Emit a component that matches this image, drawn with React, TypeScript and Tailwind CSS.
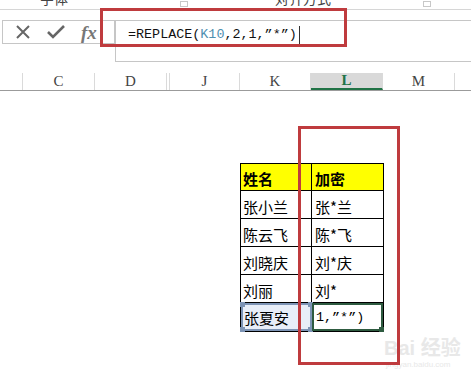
import React from "react";

const cols = [
  { label: "", w: "w-[23px]" },
  { label: "C", w: "w-[72px]" },
  { label: "D", w: "w-[72px]" },
  { label: "", w: "w-[3px]" },
  { label: "J", w: "w-[70px]" },
  { label: "K", w: "w-[71px]" },
  { label: "L", w: "w-[72px]", active: true },
  { label: "M", w: "w-[72px]" },
];

const rows = [
  ["张小兰", "张*兰"],
  ["陈云飞", "陈*飞"],
  ["刘晓庆", "刘*庆"],
  ["刘丽", "刘*"],
];

const cjk = { fontFamily: '"Noto Sans CJK SC", sans-serif' };
const mono = { fontFamily: '"Liberation Mono", "Noto Sans CJK SC", monospace' };
const serif = { fontFamily: '"Liberation Serif", serif' };

export default function App() {
  return (
    <div className="relative w-[471px] h-[383px] bg-white overflow-hidden">
      {/* ribbon group labels, cut off at the top */}
      <div className="h-[10px] border-b border-[#d6d6d6] flex text-[14px] text-[#444] leading-none overflow-hidden" style={cjk}>
        <span className="ml-[40px] -mt-[9px]">字体</span>
        <span className="ml-[112px] mt-[1px] w-[8px] h-[6px] border border-[#c8c8c8]" />
        <span className="ml-[87px] -mt-[9px]">对齐方式</span>
        <span className="ml-[92px] mt-[1px] w-[8px] h-[6px] border border-[#c8c8c8]" />
      </div>

      {/* formula bar */}
      <div className="flex h-[52px]">
        <div className="w-[115px] pt-[10px] pl-[2px]">
          <div className="h-[24px] border border-[#c6c6c6] flex items-center">
            <svg width="16" height="14" viewBox="0 0 16 14" className="ml-[12px]">
              <path d="M2 1 L14 13 M14 1 L2 13" stroke="#666" strokeWidth="2" />
            </svg>
            <svg width="18" height="14" viewBox="0 0 18 14" className="ml-[16px]">
              <path d="M1 7 L6 12 L17 1" stroke="#666" strokeWidth="2.6" fill="none" />
            </svg>
            <span className="ml-[16px] text-[19px] italic font-bold text-[#777] leading-none" style={serif}>
              fx
            </span>
          </div>
        </div>
        <div className="flex-1 mt-[10px] border-l border-t border-b border-[#c6c6c6] flex items-start pt-[4px] pl-[12px]">
          <span className="text-[13.4px] text-[#111] leading-[20px]" style={mono}>
            =REPLACE(<span className="text-[#4f8fb0]">K10</span>,2,1,”*”)
          </span>
          <span className="w-px h-[18px] bg-[#333] ml-[2px] mt-[1px]" />
        </div>
      </div>

      {/* column headers */}
      <div className="mt-[11px] flex h-[18px] border-b border-[#9b9b9b]">
        {cols.map((c, i) => (
          <div
            key={i}
            className={`${c.w} shrink-0 flex items-center justify-center border-r border-[#dadada] text-[15px] leading-none ${
              c.active ? "bg-[#d9d9d9] border-b-2 border-b-[#217346] text-[#217346] font-bold" : "text-[#444]"
            }`}
            style={serif}
          >
            {c.label}
          </div>
        ))}
      </div>

      {/* sheet content */}
      <div className="pl-[240px] pt-[72px]" style={cjk}>
        <div className="w-[144px] border border-black text-[15px] text-black">
          <div className="flex h-[27px] bg-[#ffff00] border-b border-black font-bold">
            <div className="w-[71px] border-r border-black flex items-end pl-[2px] leading-[22px]">姓名</div>
            <div className="flex-1 flex items-end pl-[3px] leading-[22px]">加密</div>
          </div>
          {rows.map((r, i) => (
            <div key={i} className="flex h-[28px] border-b border-black">
              <div className="w-[71px] border-r border-black flex items-end pl-[2px] leading-[22px]">{r[0]}</div>
              <div className="flex-1 flex items-end pl-[3px] leading-[22px]">{r[1]}</div>
            </div>
          ))}
          <div className="flex h-[28px]">
            <div className="relative w-[71px] bg-[#e8eef8] border-2 border-[#7d94b5] flex items-end pl-[1px] leading-[22px]">
              张夏安
              <span className="absolute -left-[3px] -top-[3px] w-[5px] h-[5px] bg-[#7d94b5]" />
              <span className="absolute -right-[3px] -top-[3px] w-[5px] h-[5px] bg-[#7d94b5]" />
              <span className="absolute -left-[3px] -bottom-[3px] w-[5px] h-[5px] bg-[#7d94b5]" />
              <span className="absolute -right-[3px] -bottom-[3px] w-[5px] h-[5px] bg-[#7d94b5]" />
            </div>
            <div className="relative flex-1 border-2 border-[#2e5b40] flex items-end pl-[2px] leading-[22px]">
              <span style={mono} className="text-[13.4px]">1,”*”)</span>
              <span className="absolute -right-[3px] -bottom-[3px] w-[5px] h-[5px] bg-[#2e5b40]" />
            </div>
          </div>
        </div>
      </div>

      {/* watermark */}
      <div className="absolute left-[384px] top-[338px] text-[#e8e8e8] leading-none whitespace-nowrap">
        <div className="text-[20px] font-bold" style={{ fontFamily: '"Liberation Sans", "Noto Sans CJK SC", sans-serif' }}>Bai 经验</div>
        <div className="text-[8px] mt-[3px] ml-[2px]" style={{ fontFamily: '"Liberation Sans", sans-serif' }}>jingyan.baidu.com</div>
      </div>

      {/* red annotation boxes */}
      <div className="absolute left-[100px] top-[8px] w-[247px] h-[39px] border-[3.5px] border-[#bf3b3e]" />
      <div className="absolute left-[298px] top-[126px] w-[102px] h-[239px] border-[3.5px] border-[#bf3b3e]" />
    </div>
  );
}
